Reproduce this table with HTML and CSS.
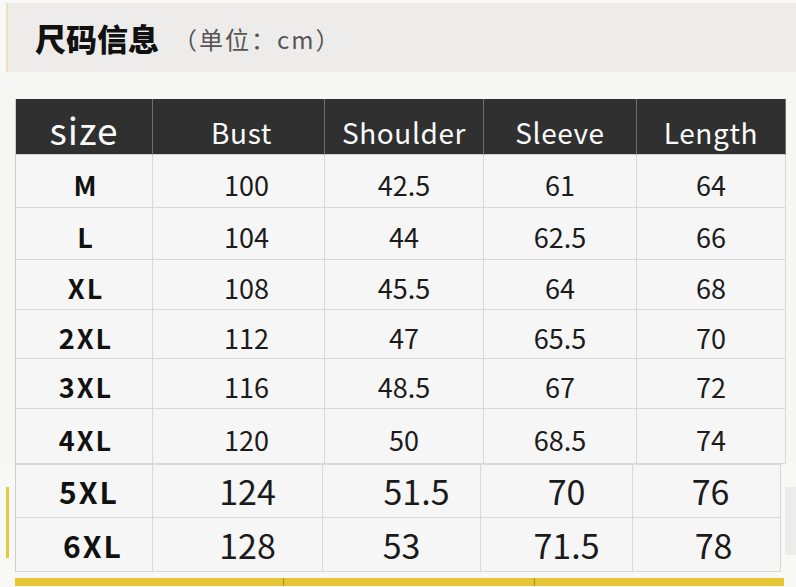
FILE: index.html
```html
<!DOCTYPE html>
<html lang="zh">
<head>
<meta charset="utf-8">
<title>尺码信息</title>
<link rel="stylesheet" href="styles.css">
</head>
<body>
<div class="page">
  <div class="title-bar">
    <span class="title">尺码信息</span>
    <span class="unit">（单位：cm）</span>
  </div>

  <div class="upper">
    <div class="grid grid-upper">
      <div class="th th-size">size</div>
      <div class="th th-c2">Bust</div>
      <div class="th">Shoulder</div>
      <div class="th">Sleeve</div>
      <div class="th">Length</div>

      <div class="td sz">M</div><div class="td c2">100</div><div class="td">42.5</div><div class="td">61</div><div class="td">64</div>
      <div class="td sz">L</div><div class="td c2">104</div><div class="td">44</div><div class="td">62.5</div><div class="td">66</div>
      <div class="td sz">XL</div><div class="td c2">108</div><div class="td">45.5</div><div class="td">64</div><div class="td">68</div>
      <div class="td sz">2XL</div><div class="td c2">112</div><div class="td">47</div><div class="td">65.5</div><div class="td">70</div>
      <div class="td sz">3XL</div><div class="td c2">116</div><div class="td">48.5</div><div class="td">67</div><div class="td">72</div>
      <div class="td sz">4XL</div><div class="td c2">120</div><div class="td">50</div><div class="td">68.5</div><div class="td">74</div>
    </div>
  </div>

  <div class="lower">
    <div class="mark"></div>
    <div class="grid grid-lower">
      <div class="ld sz s5">5XL</div><div class="ld l2">124</div><div class="ld l3a">51.5</div><div class="ld l4">70</div><div class="ld l5">76</div>
      <div class="ld sz s6">6XL</div><div class="ld l2">128</div><div class="ld l3b">53</div><div class="ld l4">71.5</div><div class="ld l5b">78</div>
    </div>
    <div class="shade"></div>
  </div>

  <div class="yellow-bar">
    <div class="seg seg1"></div>
    <div class="seg seg2"></div>
    <div class="seg seg3"></div>
  </div>
</div>
</body>
</html>
```

FILE: styles.css
```css
html, body {
  margin: 0;
  padding: 0;
}
body {
  background: #f8f8f7;
  font-family: "Noto Sans CJK SC", "Noto Sans", sans-serif;
  width: 796px;
  height: 587px;
  overflow: hidden;
}
.page {
  display: flex;
  flex-direction: column;
  padding-top: 3px;
}
.title-bar {
  margin-left: 6px;
  height: 69px;
  background: #edecea;
  border-left: 2px solid #ece3b0;
  display: flex;
  align-items: center;
  padding-left: 27px;
  box-sizing: border-box;
}
.title {
  font-size: 31px;
  font-weight: 900;
  color: #111;
  line-height: 1;
}
.unit {
  font-size: 24px;
  color: #555;
  margin-left: 14px;
  letter-spacing: 2px;
  line-height: 1;
  padding-top: 2px;
}
.upper {
  background: #f6f6f4;
  padding-top: 27px;
  padding-left: 15px;
}
.grid {
  display: grid;
  box-sizing: border-box;
  border-left: 1px solid #cfcfcf;
  background: #f6f6f6;
}
.grid-upper {
  width: 771px;
  grid-template-columns: 137px 172px 159px 153px 149px;
  grid-template-rows: 56px 53px 52px 50px 49px 50px 55px;
}
.th {
  background: #303030;
  color: #fafafa;
  font-size: 28px;
  line-height: 1;
  display: flex;
  align-items: flex-end;
  justify-content: center;
  padding-bottom: 8px;
  box-sizing: border-box;
  border-right: 1px solid #6e6e6e;
  border-bottom: 1px solid #cfcfcf;
  letter-spacing: 0.6px;
}
.th:last-child { border-right-color: #cfcfcf; }
.th-size {
  font-size: 37px;
  padding-bottom: 6px;
  letter-spacing: 1px;
}
.th-c2 { padding-left: 6px; }
.td, .ld {
  display: flex;
  align-items: center;
  justify-content: center;
  box-sizing: border-box;
  border-right: 1px solid #d8d8d8;
  border-bottom: 1px solid #d8d8d8;
  color: #1b1b1b;
  line-height: 1;
}
.td {
  font-size: 27px;
  padding-top: 6px;
}
.td.c2 { padding-left: 16px; }
.td.sz {
  font-size: 27px;
  font-weight: 700;
  color: #111;
  letter-spacing: 2px;
  padding-left: 4px;
}
.lower {
  display: flex;
  align-items: flex-start;
  padding-left: 6px;
}
.mark {
  width: 3px;
  height: 71px;
  margin-top: 23px;
  margin-right: 6px;
  background: #e3c93c;
}
.grid-lower {
  width: 766px;
  grid-template-columns: 137px 170px 158px 152px 148px;
  grid-template-rows: 53px 54px;
  border-top: 1px solid #dadada;
}
.ld {
  font-size: 34px;
}
.ld.sz {
  font-size: 30px;
  font-weight: 700;
  color: #111;
  letter-spacing: 2px;
}
.ld.s5 { padding-left: 10px; }
.ld.s6 { padding-left: 18px; }
.ld.l2 { padding-left: 20px; }
.ld.l3a { padding-left: 30px; }
.ld.l3b { padding-left: 0; }
.ld.l4 { padding-left: 20px; }
.ld.l5 { padding-left: 8px; }
.ld.l5b { padding-left: 14px; }
.shade {
  width: 11px;
  height: 68px;
  margin-top: 23px;
  margin-left: 4px;
  background: #ececec;
}
.yellow-bar {
  display: flex;
  margin-left: 15px;
  margin-top: 6px;
  width: 769px;
  height: 8px;
}
.seg {
  background: #e6c433;
  height: 100%;
}
.seg1 { width: 268px; }
.seg2 { width: 250px; border-left: 1px solid #a88d22; }
.seg3 { flex: 1; border-left: 1px solid #a88d22; }
```
